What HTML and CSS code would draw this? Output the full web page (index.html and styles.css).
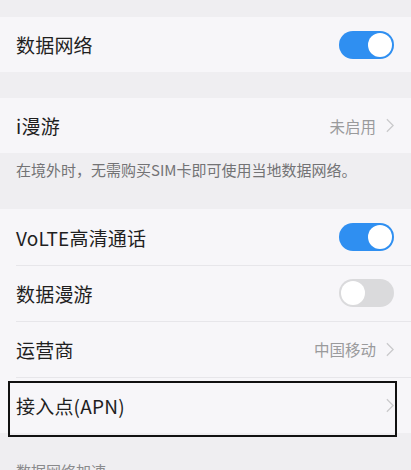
FILE: index.html
```html
<!DOCTYPE html>
<html lang="zh-CN">
<head>
  <meta charset="UTF-8">
  <meta name="viewport" content="width=device-width, initial-scale=1.0">
  <title>移动网络</title>
  <link rel="stylesheet" href="styles.css">
</head>
<body>

  <div class="settings">

    <!-- 数据网络 -->
    <div class="group group-first">
      <div class="row">
        <span class="label">数据网络</span>
        <span class="switch on"><span class="knob"></span></span>
      </div>
    </div>

    <!-- i漫游 -->
    <div class="group group-gap">
      <div class="row">
        <span class="label">i漫游</span>
        <span class="value">未启用</span>
        <svg class="chevron" viewBox="0 0 9 16"><path d="M1 1l7 7-7 7" /></svg>
      </div>
    </div>
    <p class="hint">在境外时，无需购买SIM卡即可使用当地数据网络。</p>

    <!-- 通话与运营商 -->
    <div class="group">
      <div class="row">
        <span class="label">VoLTE高清通话</span>
        <span class="switch on"><span class="knob"></span></span>
      </div>
      <div class="row">
        <span class="label">数据漫游</span>
        <span class="switch"><span class="knob"></span></span>
      </div>
      <div class="row">
        <span class="label">运营商</span>
        <span class="value">中国移动</span>
        <svg class="chevron" viewBox="0 0 9 16"><path d="M1 1l7 7-7 7" /></svg>
      </div>
      <div class="row row-marked">
        <span class="label">接入点(APN)</span>
        <svg class="chevron" viewBox="0 0 9 16"><path d="M1 1l7 7-7 7" /></svg>
      </div>
    </div>

    <p class="section-title">数据网络加速</p>

  </div>

</body>
</html>
```

FILE: styles.css
```css
body {
  margin: 0;
  background-color: #efeef1;
  font-family: "Noto Sans CJK SC", "Noto Sans", sans-serif;
  color: #1f1f1f;
  overflow: hidden;
}
.settings {
  width: 411px;
}
.group {
  background: #f7f6f9;
}
.group-first {
  margin-top: 17px;
}
.group-gap {
  margin-top: 26px;
}
.row {
  position: relative;
  display: flex;
  align-items: center;
  height: 56px;
  padding: 0 17px 0 16px;
  box-sizing: border-box;
}
.group-first .row {
  height: 55px;
}
.group-gap .row {
  height: 55px;
}
.row + .row::before {
  content: "";
  position: absolute;
  top: 0;
  left: 16px;
  right: 0;
  height: 1px;
  background: #e7e6ea;
}
.label {
  flex: 1;
  font-size: 19px;
  letter-spacing: 0.2px;
}
.value {
  font-size: 15.5px;
  color: #9a9a9c;
  margin-right: 10px;
}
.chevron {
  width: 8px;
  height: 15px;
  fill: none;
  stroke: #c9c9cb;
  stroke-width: 1.4;
}
.switch {
  position: relative;
  width: 55px;
  height: 28px;
  border-radius: 14px;
  background: #dadadc;
  box-sizing: border-box;
}
.switch .knob {
  position: absolute;
  top: 2px;
  left: 2px;
  width: 24px;
  height: 24px;
  border-radius: 50%;
  background: #fff;
}
.switch.on {
  background: #2f8ff1;
}
.switch.on .knob {
  left: auto;
  right: 2px;
}
.hint {
  margin: 0;
  height: 56px;
  padding: 6px 16px 0;
  box-sizing: border-box;
  font-size: 15px;
  color: #737375;
}
.row-marked::after {
  content: "";
  position: absolute;
  top: 4px;
  bottom: -4px;
  left: 8px;
  right: 14px;
  border: 2px solid #111;
}
.section-title {
  margin: 0;
  padding: 27px 16px 0;
  font-size: 15px;
  color: #8a8a8c;
}
```
